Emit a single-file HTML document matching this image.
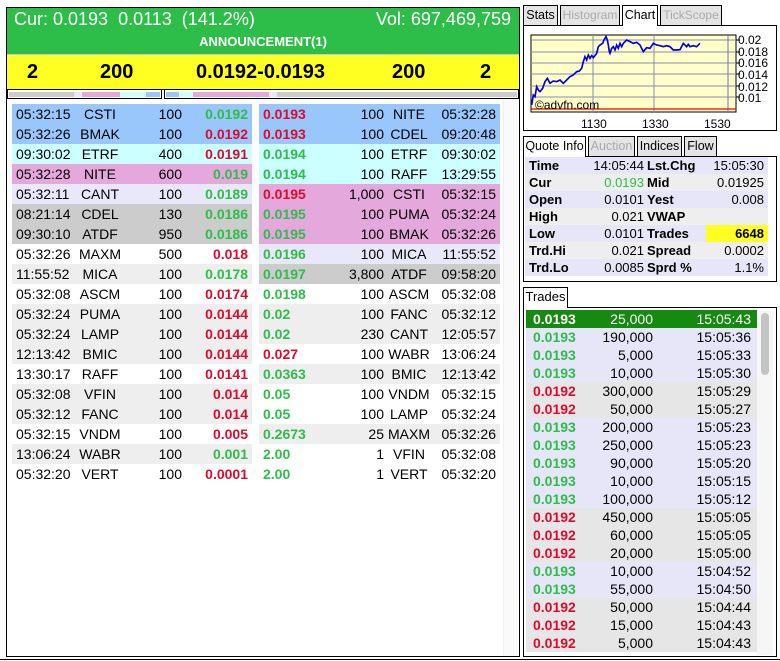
<!DOCTYPE html>
<html><head><meta charset="utf-8"><style>
*{margin:0;padding:0;box-sizing:border-box}
body{width:780px;height:661px;background:#fff;font-family:"Liberation Sans",Arial,sans-serif;position:relative;overflow:hidden;color:#000}
.a{position:absolute}
.g{color:#2dbd49}.r{color:#de0a2c}.b{font-weight:bold}
table{border-collapse:collapse;position:absolute;table-layout:fixed}
td{white-space:nowrap;padding:0}
.ob td{height:20px;font-size:14px;line-height:20px}
.bl{background:#99c7fb}.cy{background:#ccffff}.pk{background:#e4a8dc}.lv{background:#e8e8fa}.gy{background:#cccccc}.lg{background:#eeeeee}.wh{background:#fff}
.tab{position:absolute;height:20px;border:1px solid #000;border-bottom:none;background:#e4e4e4;font-size:12.5px;line-height:18px;text-align:center;color:#000;white-space:nowrap;overflow:hidden}
.tab.dis{color:#aaa}.tab.on{background:#fff;height:21px}
.qi td{height:17px;font-size:13px;line-height:17px}
.tr td{height:18px;font-size:14px;line-height:18px}
.tq{background:#e6e6f8}.tgr{background:#e6e6e6}
</style></head><body>

<div class="a" style="left:6px;top:7px;width:514px;height:650px;border:1px solid #000"></div>
<div class="a" style="left:7px;top:8px;width:512px;height:46px;background:#2dbe49"></div>
<div class="a" style="left:14px;top:8px;font-size:18px;color:#fff;line-height:22px">Cur: 0.0193&nbsp; 0.0113&nbsp; (141.2%)</div>
<div class="a" style="right:269px;top:8px;font-size:18px;color:#fff;line-height:22px">Vol: 697,469,759</div>
<div class="a" style="left:7px;width:512px;top:34px;text-align:center;font-size:13px;font-weight:bold;color:#fff;line-height:16px">ANNOUNCEMENT(1)</div>
<div class="a" style="left:7px;top:54px;width:512px;height:35px;background:#ffff22;border-top:1px solid #ccc"></div>
<div class="a b" style="top:60px;font-size:20px;line-height:24px;left:27px">2</div>
<div class="a b" style="top:60px;font-size:20px;line-height:24px;left:100px">200</div>
<div class="a b" style="top:60px;font-size:20px;line-height:24px;left:196px">0.0192-0.0193</div>
<div class="a b" style="top:60px;font-size:20px;line-height:24px;left:392px">200</div>
<div class="a b" style="top:60px;font-size:20px;line-height:24px;left:480px">2</div>
<div class="a" style="left:7px;top:89px;width:512px;height:1px;background:#000"></div>
<div class="a" style="left:7px;top:90px;width:155px;height:9px;border:1px solid #000;border-top:none"></div>
<div class="a" style="left:9px;top:92px;width:65px;height:5px;background:#cccccc"></div>
<div class="a" style="left:74px;top:92px;width:8px;height:5px;background:#e8e8fa"></div>
<div class="a" style="left:82px;top:92px;width:38px;height:5px;background:#e4a8dc"></div>
<div class="a" style="left:120px;top:92px;width:26px;height:5px;background:#ccffff"></div>
<div class="a" style="left:146px;top:92px;width:14px;height:5px;background:#99c7fb"></div>
<div class="a" style="left:164px;top:90px;width:355px;height:9px;border:1px solid #000;border-top:none"></div>
<div class="a" style="left:166px;top:92px;width:13px;height:5px;background:#99c7fb"></div>
<div class="a" style="left:179px;top:92px;width:14px;height:5px;background:#ccffff"></div>
<div class="a" style="left:193px;top:92px;width:76px;height:5px;background:#e4a8dc"></div>
<div class="a" style="left:269px;top:92px;width:8px;height:5px;background:#e8e8fa"></div>
<div class="a" style="left:277px;top:92px;width:240px;height:5px;background:#cccccc"></div>
<div class="a" style="left:503px;top:100px;width:15px;height:556px;background:#fafafa;border-left:1px solid #eee"></div>

<table class="ob" style="left:12px;top:104px;width:240px">
<colgroup><col style="width:63px"><col style="width:50px"><col style="width:57px"><col style="width:70px"></colgroup>
<tr class="bl"><td style="padding-left:4px">05:32:15</td><td style="text-align:center">CSTI</td><td style="text-align:right">100</td><td class="g b" style="text-align:right;padding-right:4px">0.0192</td></tr>
<tr class="bl"><td style="padding-left:4px">05:32:26</td><td style="text-align:center">BMAK</td><td style="text-align:right">100</td><td class="r b" style="text-align:right;padding-right:4px">0.0192</td></tr>
<tr class="cy"><td style="padding-left:4px">09:30:02</td><td style="text-align:center">ETRF</td><td style="text-align:right">400</td><td class="r b" style="text-align:right;padding-right:4px">0.0191</td></tr>
<tr class="pk"><td style="padding-left:4px">05:32:28</td><td style="text-align:center">NITE</td><td style="text-align:right">600</td><td class="g b" style="text-align:right;padding-right:4px">0.019</td></tr>
<tr class="lv"><td style="padding-left:4px">05:32:11</td><td style="text-align:center">CANT</td><td style="text-align:right">100</td><td class="g b" style="text-align:right;padding-right:4px">0.0189</td></tr>
<tr class="gy"><td style="padding-left:4px">08:21:14</td><td style="text-align:center">CDEL</td><td style="text-align:right">130</td><td class="g b" style="text-align:right;padding-right:4px">0.0186</td></tr>
<tr class="gy"><td style="padding-left:4px">09:30:10</td><td style="text-align:center">ATDF</td><td style="text-align:right">950</td><td class="g b" style="text-align:right;padding-right:4px">0.0186</td></tr>
<tr class="wh"><td style="padding-left:4px">05:32:26</td><td style="text-align:center">MAXM</td><td style="text-align:right">500</td><td class="r b" style="text-align:right;padding-right:4px">0.018</td></tr>
<tr class="lg"><td style="padding-left:4px">11:55:52</td><td style="text-align:center">MICA</td><td style="text-align:right">100</td><td class="g b" style="text-align:right;padding-right:4px">0.0178</td></tr>
<tr class="wh"><td style="padding-left:4px">05:32:08</td><td style="text-align:center">ASCM</td><td style="text-align:right">100</td><td class="r b" style="text-align:right;padding-right:4px">0.0174</td></tr>
<tr class="lg"><td style="padding-left:4px">05:32:24</td><td style="text-align:center">PUMA</td><td style="text-align:right">100</td><td class="r b" style="text-align:right;padding-right:4px">0.0144</td></tr>
<tr class="lg"><td style="padding-left:4px">05:32:24</td><td style="text-align:center">LAMP</td><td style="text-align:right">100</td><td class="r b" style="text-align:right;padding-right:4px">0.0144</td></tr>
<tr class="lg"><td style="padding-left:4px">12:13:42</td><td style="text-align:center">BMIC</td><td style="text-align:right">100</td><td class="r b" style="text-align:right;padding-right:4px">0.0144</td></tr>
<tr class="wh"><td style="padding-left:4px">13:30:17</td><td style="text-align:center">RAFF</td><td style="text-align:right">100</td><td class="r b" style="text-align:right;padding-right:4px">0.0141</td></tr>
<tr class="lg"><td style="padding-left:4px">05:32:08</td><td style="text-align:center">VFIN</td><td style="text-align:right">100</td><td class="r b" style="text-align:right;padding-right:4px">0.014</td></tr>
<tr class="lg"><td style="padding-left:4px">05:32:12</td><td style="text-align:center">FANC</td><td style="text-align:right">100</td><td class="r b" style="text-align:right;padding-right:4px">0.014</td></tr>
<tr class="wh"><td style="padding-left:4px">05:32:15</td><td style="text-align:center">VNDM</td><td style="text-align:right">100</td><td class="r b" style="text-align:right;padding-right:4px">0.005</td></tr>
<tr class="lg"><td style="padding-left:4px">13:06:24</td><td style="text-align:center">WABR</td><td style="text-align:right">100</td><td class="g b" style="text-align:right;padding-right:4px">0.001</td></tr>
<tr class="wh"><td style="padding-left:4px">05:32:20</td><td style="text-align:center">VERT</td><td style="text-align:right">100</td><td class="r b" style="text-align:right;padding-right:4px">0.0001</td></tr>
</table>

<table class="ob" style="left:259px;top:104px;width:241px">
<colgroup><col style="width:68px"><col style="width:57px"><col style="width:50px"><col style="width:66px"></colgroup>
<tr class="bl"><td class="r b" style="padding-left:4px">0.0193</td><td style="text-align:right">100</td><td style="text-align:center">NITE</td><td style="text-align:right;padding-right:4px">05:32:28</td></tr>
<tr class="bl"><td class="r b" style="padding-left:4px">0.0193</td><td style="text-align:right">100</td><td style="text-align:center">CDEL</td><td style="text-align:right;padding-right:4px">09:20:48</td></tr>
<tr class="cy"><td class="g b" style="padding-left:4px">0.0194</td><td style="text-align:right">100</td><td style="text-align:center">ETRF</td><td style="text-align:right;padding-right:4px">09:30:02</td></tr>
<tr class="cy"><td class="g b" style="padding-left:4px">0.0194</td><td style="text-align:right">100</td><td style="text-align:center">RAFF</td><td style="text-align:right;padding-right:4px">13:29:55</td></tr>
<tr class="pk"><td class="r b" style="padding-left:4px">0.0195</td><td style="text-align:right">1,000</td><td style="text-align:center">CSTI</td><td style="text-align:right;padding-right:4px">05:32:15</td></tr>
<tr class="pk"><td class="g b" style="padding-left:4px">0.0195</td><td style="text-align:right">100</td><td style="text-align:center">PUMA</td><td style="text-align:right;padding-right:4px">05:32:24</td></tr>
<tr class="pk"><td class="g b" style="padding-left:4px">0.0195</td><td style="text-align:right">100</td><td style="text-align:center">BMAK</td><td style="text-align:right;padding-right:4px">05:32:26</td></tr>
<tr class="lv"><td class="g b" style="padding-left:4px">0.0196</td><td style="text-align:right">100</td><td style="text-align:center">MICA</td><td style="text-align:right;padding-right:4px">11:55:52</td></tr>
<tr class="gy"><td class="g b" style="padding-left:4px">0.0197</td><td style="text-align:right">3,800</td><td style="text-align:center">ATDF</td><td style="text-align:right;padding-right:4px">09:58:20</td></tr>
<tr class="wh"><td class="g b" style="padding-left:4px">0.0198</td><td style="text-align:right">100</td><td style="text-align:center">ASCM</td><td style="text-align:right;padding-right:4px">05:32:08</td></tr>
<tr class="lg"><td class="g b" style="padding-left:4px">0.02</td><td style="text-align:right">100</td><td style="text-align:center">FANC</td><td style="text-align:right;padding-right:4px">05:32:12</td></tr>
<tr class="lg"><td class="g b" style="padding-left:4px">0.02</td><td style="text-align:right">230</td><td style="text-align:center">CANT</td><td style="text-align:right;padding-right:4px">12:05:57</td></tr>
<tr class="wh"><td class="r b" style="padding-left:4px">0.027</td><td style="text-align:right">100</td><td style="text-align:center">WABR</td><td style="text-align:right;padding-right:4px">13:06:24</td></tr>
<tr class="lg"><td class="g b" style="padding-left:4px">0.0363</td><td style="text-align:right">100</td><td style="text-align:center">BMIC</td><td style="text-align:right;padding-right:4px">12:13:42</td></tr>
<tr class="wh"><td class="g b" style="padding-left:4px">0.05</td><td style="text-align:right">100</td><td style="text-align:center">VNDM</td><td style="text-align:right;padding-right:4px">05:32:15</td></tr>
<tr class="wh"><td class="g b" style="padding-left:4px">0.05</td><td style="text-align:right">100</td><td style="text-align:center">LAMP</td><td style="text-align:right;padding-right:4px">05:32:24</td></tr>
<tr class="lg"><td class="g b" style="padding-left:4px">0.2673</td><td style="text-align:right">25</td><td style="text-align:center">MAXM</td><td style="text-align:right;padding-right:4px">05:32:26</td></tr>
<tr class="wh"><td class="g b" style="padding-left:4px">2.00</td><td style="text-align:right">1</td><td style="text-align:center">VFIN</td><td style="text-align:right;padding-right:4px">05:32:08</td></tr>
<tr class="wh"><td class="g b" style="padding-left:4px">2.00</td><td style="text-align:right">1</td><td style="text-align:center">VERT</td><td style="text-align:right;padding-right:4px">05:32:20</td></tr>
</table>

<div class="tab" style="left:523px;top:5px;width:35px">Stats</div>
<div class="tab dis" style="left:560px;top:5px;width:60px;font-size:12px">Histogram</div>
<div class="tab on" style="left:622px;top:5px;width:36px">Chart</div>
<div class="tab dis" style="left:660px;top:5px;width:62px;font-size:12px">TickScope</div>
<div class="a" style="left:523px;top:25px;width:254px;height:106px;border:1px solid #000"></div>
<div class="a" style="left:623px;top:25px;width:34px;height:1px;background:#fff"></div>
<svg class="a" style="left:0;top:0" width="780" height="140">
<rect x="531" y="35" width="205" height="77" fill="#ffffc8" stroke="#000" stroke-width="1"/>
<g stroke="#8a8ac0" stroke-width="1">
<line x1="531" y1="40" x2="736" y2="40"/><line x1="531" y1="52" x2="736" y2="52"/><line x1="531" y1="63" x2="736" y2="63"/><line x1="531" y1="74" x2="736" y2="74"/><line x1="531" y1="86" x2="736" y2="86"/><line x1="531" y1="97" x2="736" y2="97"/>
<line x1="593" y1="35" x2="593" y2="112"/><line x1="654" y1="35" x2="654" y2="112"/><line x1="728" y1="35" x2="728" y2="112" stroke="#7070b0"/>
</g>
<line x1="531" y1="109" x2="736" y2="109" stroke="#e00" stroke-width="1.2"/>
<g transform="translate(520,25) scale(0.3333)">
<polyline fill="none" stroke="#0000ee" stroke-width="5" points="35,240 40,210 45,215 50,185 55,195 60,200 68,190 75,170 82,160 90,175 100,168 110,170 120,165 130,175 140,165 150,155 160,150 170,140 178,138 185,130 190,110 195,95 200,105 205,90 210,100 215,92 220,98 230,85 235,65 240,60 248,55 252,45 258,35 262,45 265,60 268,80 270,85 275,70 280,65 285,75 290,60 295,70 300,55 305,65 310,55 320,45 330,50 340,55 350,52 360,60 365,70 370,80 380,68 390,70 400,55 410,60 420,62 430,65 440,62 450,65 460,75 470,75 480,74 490,55 500,65 505,58 510,65 520,62 530,65 540,55"/>
</g>
<text x="535" y="109" font-size="12" font-family="Liberation Sans" fill="#000">©advfn.com</text>
<g font-size="12" font-family="Liberation Sans" fill="#000">
<text x="738" y="44">0.02</text><text x="738" y="56">0.018</text><text x="738" y="67">0.016</text><text x="738" y="79">0.014</text><text x="738" y="91">0.012</text><text x="738" y="102">0.01</text>
<text x="581" y="128">1130</text><text x="642" y="128">1330</text><text x="704" y="128">1530</text>
</g>
<g stroke="#000"><line x1="736" y1="40" x2="740" y2="40"/><line x1="736" y1="52" x2="740" y2="52"/><line x1="736" y1="63" x2="740" y2="63"/><line x1="736" y1="74" x2="740" y2="74"/><line x1="736" y1="86" x2="740" y2="86"/><line x1="736" y1="97" x2="740" y2="97"/></g>
</svg>

<div class="tab on" style="left:523px;top:136px;width:63px">Quote Info</div>
<div class="tab dis" style="left:588px;top:136px;width:47px">Auction</div>
<div class="tab" style="left:637px;top:136px;width:45px">Indices</div>
<div class="tab" style="left:684px;top:136px;width:33px">Flow</div>
<div class="a" style="left:523px;top:156px;width:254px;height:126px;border:1px solid #000"></div>
<div class="a" style="left:524px;top:156px;width:61px;height:1px;background:#fff"></div>
<table class="qi" style="left:525px;top:157px;width:243px">
<colgroup><col style="width:55px"><col style="width:64px"><col style="width:62px"><col style="width:62px"></colgroup>
<tr class="tq"><td class="b" style="padding-left:4px">Time</td><td style="text-align:right">14:05:44</td><td class="b" style="padding-left:3px">Lst.Chg</td><td style="text-align:right;padding-right:4px">15:05:30</td></tr>
<tr class="lg"><td class="b" style="padding-left:4px">Cur</td><td class="g" style="text-align:right">0.0193</td><td class="b" style="padding-left:3px">Mid</td><td style="text-align:right;padding-right:4px">0.01925</td></tr>
<tr class="tq"><td class="b" style="padding-left:4px">Open</td><td style="text-align:right">0.0101</td><td class="b" style="padding-left:3px">Yest</td><td style="text-align:right;padding-right:4px">0.008</td></tr>
<tr class="lg"><td class="b" style="padding-left:4px">High</td><td style="text-align:right">0.021</td><td class="b" style="padding-left:3px">VWAP</td><td style="text-align:right;padding-right:4px"></td></tr>
<tr class="tq"><td class="b" style="padding-left:4px">Low</td><td style="text-align:right">0.0101</td><td class="b" style="padding-left:3px">Trades</td><td class="b" style="text-align:right;padding-right:4px;background:#ffff22">6648</td></tr>
<tr class="lg"><td class="b" style="padding-left:4px">Trd.Hi</td><td style="text-align:right">0.021</td><td class="b" style="padding-left:3px">Spread</td><td style="text-align:right;padding-right:4px">0.0002</td></tr>
<tr class="tq"><td class="b" style="padding-left:4px">Trd.Lo</td><td style="text-align:right">0.0085</td><td class="b" style="padding-left:3px">Sprd %</td><td style="text-align:right;padding-right:4px">1.1%</td></tr>
</table>

<div class="tab on" style="left:523px;top:287px;width:45px;font-size:13px">Trades</div>
<div class="a" style="left:523px;top:307px;width:254px;height:350px;border:1px solid #000"></div>
<div class="a" style="left:524px;top:307px;width:43px;height:1px;background:#fff"></div>
<div class="a" style="left:757px;top:311px;width:16px;height:344px;background:#f6f6f6"></div>
<div class="a" style="left:761px;top:313px;width:8px;height:62px;background:#c4c4c4;border-radius:4px"></div>
<table class="tr" style="left:526px;top:310px;width:231px">
<colgroup><col style="width:70px"><col style="width:57px"><col style="width:104px"></colgroup>
<tr style="background:#168a10;color:#fff"><td class="b" style="padding-left:7px">0.0193</td><td style="text-align:right">25,000</td><td style="text-align:right;padding-right:6px">15:05:43</td></tr>
<tr class="tq"><td class="g b" style="padding-left:7px">0.0193</td><td style="text-align:right">190,000</td><td style="text-align:right;padding-right:6px">15:05:36</td></tr>
<tr class="tq"><td class="g b" style="padding-left:7px">0.0193</td><td style="text-align:right">5,000</td><td style="text-align:right;padding-right:6px">15:05:33</td></tr>
<tr class="tq"><td class="g b" style="padding-left:7px">0.0193</td><td style="text-align:right">10,000</td><td style="text-align:right;padding-right:6px">15:05:30</td></tr>
<tr class="tgr"><td class="r b" style="padding-left:7px">0.0192</td><td style="text-align:right">300,000</td><td style="text-align:right;padding-right:6px">15:05:29</td></tr>
<tr class="tgr"><td class="r b" style="padding-left:7px">0.0192</td><td style="text-align:right">50,000</td><td style="text-align:right;padding-right:6px">15:05:27</td></tr>
<tr class="tq"><td class="g b" style="padding-left:7px">0.0193</td><td style="text-align:right">200,000</td><td style="text-align:right;padding-right:6px">15:05:23</td></tr>
<tr class="tq"><td class="g b" style="padding-left:7px">0.0193</td><td style="text-align:right">250,000</td><td style="text-align:right;padding-right:6px">15:05:23</td></tr>
<tr class="tq"><td class="g b" style="padding-left:7px">0.0193</td><td style="text-align:right">90,000</td><td style="text-align:right;padding-right:6px">15:05:20</td></tr>
<tr class="tq"><td class="g b" style="padding-left:7px">0.0193</td><td style="text-align:right">10,000</td><td style="text-align:right;padding-right:6px">15:05:15</td></tr>
<tr class="tq"><td class="g b" style="padding-left:7px">0.0193</td><td style="text-align:right">100,000</td><td style="text-align:right;padding-right:6px">15:05:12</td></tr>
<tr class="tgr"><td class="r b" style="padding-left:7px">0.0192</td><td style="text-align:right">450,000</td><td style="text-align:right;padding-right:6px">15:05:05</td></tr>
<tr class="tgr"><td class="r b" style="padding-left:7px">0.0192</td><td style="text-align:right">60,000</td><td style="text-align:right;padding-right:6px">15:05:05</td></tr>
<tr class="tgr"><td class="r b" style="padding-left:7px">0.0192</td><td style="text-align:right">20,000</td><td style="text-align:right;padding-right:6px">15:05:00</td></tr>
<tr class="tq"><td class="g b" style="padding-left:7px">0.0193</td><td style="text-align:right">10,000</td><td style="text-align:right;padding-right:6px">15:04:52</td></tr>
<tr class="tq"><td class="g b" style="padding-left:7px">0.0193</td><td style="text-align:right">55,000</td><td style="text-align:right;padding-right:6px">15:04:50</td></tr>
<tr class="tgr"><td class="r b" style="padding-left:7px">0.0192</td><td style="text-align:right">50,000</td><td style="text-align:right;padding-right:6px">15:04:44</td></tr>
<tr class="tgr"><td class="r b" style="padding-left:7px">0.0192</td><td style="text-align:right">15,000</td><td style="text-align:right;padding-right:6px">15:04:43</td></tr>
<tr class="tgr"><td class="r b" style="padding-left:7px">0.0192</td><td style="text-align:right">5,000</td><td style="text-align:right;padding-right:6px">15:04:43</td></tr>
</table>
<div class="a" style="left:0;top:659px;width:780px;height:1px;background:#000"></div>
</body></html>
